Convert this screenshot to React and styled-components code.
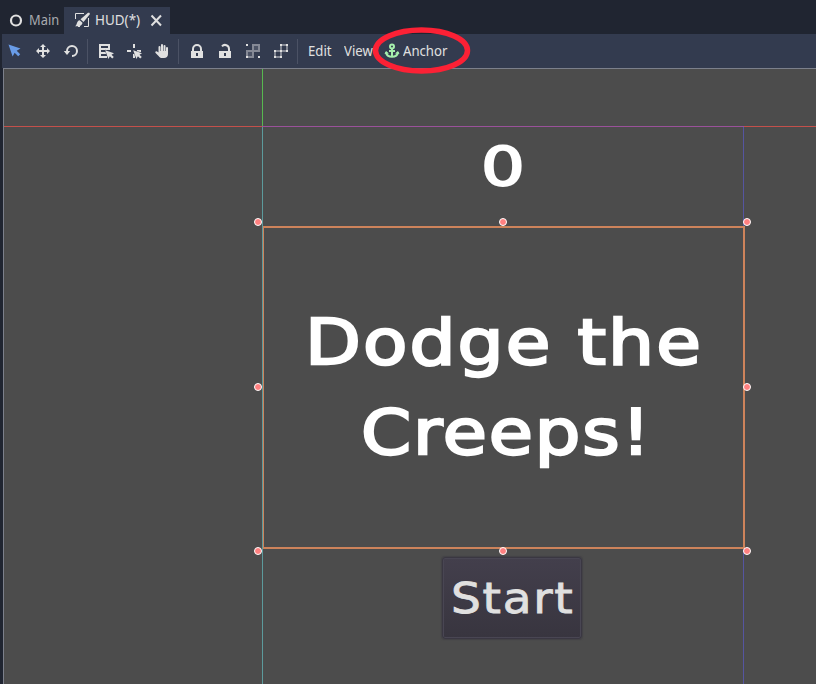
import React from "react";
import styled, { createGlobalStyle } from "styled-components";

const Global = createGlobalStyle`
  body { margin: 0; background: #202531; overflow: hidden; }
  * { box-sizing: border-box; }
`;

const Editor = styled.div`
  width: 816px;
  height: 684px;
  display: flex;
  flex-direction: column;
  position: relative;
  overflow: hidden;
  background: #202531;
  font: 14px/20px "Noto Sans", sans-serif;
  color: #e0e0e0;
`;

const TabBar = styled.div`
  height: 34px;
  display: flex;
  align-items: flex-end;
  padding-left: 2px;
`;

const Tab = styled.div`
  width: ${(p) => p.$width}px;
  height: 27px;
  display: flex;
  align-items: center;
  padding: 0 0 2px ${(p) => p.$pad}px;
  gap: 5px;
  background: ${(p) => (p.$active ? "#333b4f" : "transparent")};
  color: ${(p) => (p.$active ? "#e0e0e0" : "#a9abaf")};
`;

const Label = styled.span`
  display: block;
  width: ${(p) => p.$width}px;
  white-space: nowrap;
  transform: scaleX(${(p) => p.$scale || 0.94});
  transform-origin: left;
`;

const Toolbar = styled.div`
  height: 34px;
  margin-left: 2px;
  display: flex;
  align-items: center;
  background: #333b4f;
  flex-shrink: 0;
`;

const ToolButton = styled.div`
  width: 28px;
  height: 28px;
  padding-left: 5px;
  display: flex;
  align-items: center;
`;

const Separator = styled.div`
  width: 1px;
  height: 25px;
  margin: 0 5px 0 1px;
  background: #4b5265;
`;

const Menus = styled.div`
  display: flex;
  padding-left: 5px;
`;

const MenuItem = styled.div`
  display: flex;
  align-items: center;
  gap: 3px;
  width: ${(p) => p.$width}px;
`;

const Icon = styled.svg`
  width: 16px;
  height: 16px;
  flex-shrink: 0;
  display: block;
  overflow: visible;
`;

const Canvas = styled.div`
  flex: 1;
  margin-left: 3px;
  position: relative;
  overflow: hidden;
  background: #4c4c4c;
  border-top: 1px solid #7c808b;
  border-left: 1px solid #7c808b;
`;

const Scene = styled.div`
  position: absolute;
  left: -4px;
  top: -69px;
  width: 816px;
  height: 684px;
`;

const Guide = styled.div`
  position: absolute;
  left: ${(p) => p.$x}px;
  top: ${(p) => p.$y}px;
  width: ${(p) => p.$w || 1}px;
  height: ${(p) => p.$h || 1}px;
  background: ${(p) => p.$color};
`;

const Selection = styled.div`
  position: absolute;
  left: 262px;
  top: 226px;
  width: 483px;
  height: 323px;
  border: 2px solid #cd835b;
`;

const Handle = styled.div`
  position: absolute;
  left: ${(p) => p.$x - 4}px;
  top: ${(p) => p.$y - 4}px;
  width: 8px;
  height: 8px;
  border-radius: 50%;
  background: #ff8080;
  border: 1px solid #fff;
`;

const GameText = styled.div`
  position: absolute;
  left: ${(p) => p.$x}px;
  top: ${(p) => p.$y}px;
  font: ${(p) => p.$size}px/90px "DejaVu Sans", sans-serif;
  letter-spacing: ${(p) => p.$spacing || 0}px;
  color: ${(p) => p.$color || "#fff"};
  -webkit-text-stroke: ${(p) => p.$stroke}px ${(p) => p.$color || "#fff"};
  white-space: nowrap;
  transform: scaleX(${(p) => p.$scale || 1});
  transform-origin: left;
`;

const StartButton = styled.div`
  position: absolute;
  left: 442px;
  top: 557px;
  width: 140px;
  height: 82px;
  border-radius: 3px;
  border: 1px solid #3a3742;
  background: linear-gradient(#433f4c, #38353f);
  box-shadow: inset 0 0 0 1px #494653, 0 0 1px 1px #434246;
`;

const Highlight = styled.svg`
  position: absolute;
  left: 370px;
  top: 24px;
  width: 104px;
  height: 54px;
`;

const c = "#e0e0e0";

const Cursor = ({ color = c }) => (
  <path d="M1.5 1.5 13.5 5.6 9.7 7.7 13.2 11.3 11.2 13.3 7.7 9.8 5.6 13.5Z" fill={color} />
);

const SmallCursor = () => (
  <path
    d="M7.2 7.2 16 10.2 13.5 11.7 15.8 14 14.2 15.6 11.9 13.3 10.4 16Z"
    fill={c}
    stroke="#333b4f"
    strokeWidth=".7"
    paintOrder="stroke"
  />
);

const MoveIcon = () => (
  <Icon viewBox="0 0 16 16">
    <path d="M8 1 11 4H9v3h3V5l3 3-3 3V9H9v3h2l-3 3-3-3h2V9H4v2L1 8l3-3v2h3V4H5Z" fill={c} />
  </Icon>
);

const RotateIcon = () => (
  <Icon viewBox="0 0 16 16">
    <path d="M4 9V8a5 5 0 1 1 5 5" fill="none" stroke={c} strokeWidth="2" />
    <path d="M.8 8h6.4L4 12Z" fill={c} />
  </Icon>
);

const ListIcon = () => (
  <Icon viewBox="0 0 16 16">
    <path d="M1 1h11v2H3v2h9v2H3v2h5v2H3v2h6v2H1Z" fill={c} />
    <path d="M1 1h2v14H1ZM10 1h2v6h-2Z" fill={c} />
    <SmallCursor />
  </Icon>
);

const PivotIcon = () => (
  <Icon viewBox="0 0 16 16">
    <path d="M7 1h2v4H7ZM1 7h4v2H1ZM11 7h4v2h-4ZM7 11h2v4H7Z" fill={c} />
    <SmallCursor />
  </Icon>
);

const HandIcon = () => (
  <Icon viewBox="0 0 16 16">
    <path
      d="M4.5 9.5V4a1 1 0 0 1 2 0v4h.5V2a1 1 0 0 1 2 0v6h.5V3a1 1 0 0 1 2 0v5h.5V5a1 1 0 0 1 2 0v6c0 2.5-1.5 4-4 4H8c-1.5 0-2.5-.6-3.2-1.8L1.6 10a1 1 0 0 1 1.5-1.5Z"
      fill={c}
    />
  </Icon>
);

const LockIcon = ({ open }) => (
  <Icon viewBox="0 0 16 16">
    <path
      d={open ? "M5 3.3A4 4 0 0 1 12 6v3" : "M4 9V6a4 4 0 0 1 8 0v3"}
      fill="none"
      stroke={c}
      strokeWidth="2"
    />
    <path d="M2 8h12v7H2ZM7 10v3h2v-3Z" fill={c} fillRule="evenodd" />
  </Icon>
);

const nodes = [[7, 1], [13, 1], [1, 7], [7, 7], [13, 7], [1, 13], [7, 13]];
const corners = [[1, 1], [1, 13], [13, 13]];

const GroupIcon = ({ dots, faint }) => (
  <Icon viewBox="0 0 16 16" shapeRendering="crispEdges">
    <path d="M8 2h6v6H8ZM2 8h6v6H2Z" fill="none" stroke="#858995" strokeWidth="2" />
    {faint && <path d="M9 3h4v4H9ZM3 9h4v4H3Z" fill="#4c5365" />}
    {dots.map(([x, y]) => (
      <rect key={`${x}-${y}`} x={x} y={y} width="2" height="2" fill={c} />
    ))}
  </Icon>
);

const AnchorIcon = () => (
  <Icon viewBox="0 0 16 16">
    <circle cx="8" cy="3.5" r="2" fill="none" stroke="#a5efac" strokeWidth="2" />
    <path d="M8 5v8.5M5 8h6M2 9c.4 3 2.7 4.8 6 4.8S13.6 12 14 9" fill="none" stroke="#a5efac" strokeWidth="2" />
    <path d="M.5 11 2 8l3 2.5ZM15.5 11 14 8l-3 2.5Z" fill="#a5efac" />
  </Icon>
);

const CanvasItemIcon = () => (
  <Icon viewBox="0 0 16 16">
    <path d="M10 1.5H1.5V7M14.5 6v8.5H10M6 14.5H4" fill="none" stroke={c} />
    <path d="M15.3.7 16 2 9.5 10 6.5 7.3 14 .7ZM5.7 8.2 8.5 10.7C8 14 4.5 14.5 1 14.3 3.3 13 2.5 8.5 5.7 8.2Z" fill={c} />
  </Icon>
);

const handles = [
  [258, 222], [503, 222], [747, 222], [258, 387],
  [747, 387], [258, 551], [503, 551], [747, 551],
];

export default function App() {
  return (
    <Editor>
      <Global />
      <TabBar>
        <Tab $width={62} $pad={6}>
          <Icon viewBox="0 0 16 16">
            <circle cx="8" cy="8.5" r="5" fill="none" stroke={c} strokeWidth="2.2" />
          </Icon>
          <Label $width={30} $scale={0.92}>Main</Label>
        </Tab>
        <Tab $active $width={106} $pad={10}>
          <CanvasItemIcon />
          <Label $width={48} $scale={0.96}>HUD(*)</Label>
          <Icon viewBox="0 0 16 16">
            <path d="m3.5 3.5 9.5 10M13 3.5l-9.5 10" stroke={c} strokeWidth="2" />
          </Icon>
        </Tab>
      </TabBar>
      <Toolbar>
        <ToolButton><Icon viewBox="0 0 16 16"><Cursor color="#699ce8" /></Icon></ToolButton>
        <ToolButton><MoveIcon /></ToolButton>
        <ToolButton><RotateIcon /></ToolButton>
        <Separator />
        <ToolButton><ListIcon /></ToolButton>
        <ToolButton><PivotIcon /></ToolButton>
        <ToolButton><HandIcon /></ToolButton>
        <Separator />
        <ToolButton><LockIcon /></ToolButton>
        <ToolButton><LockIcon open /></ToolButton>
        <ToolButton><GroupIcon dots={corners} faint /></ToolButton>
        <ToolButton><GroupIcon dots={nodes} /></ToolButton>
        <Separator />
        <Menus>
          <MenuItem $width={36}><Label $width={28}>Edit</Label></MenuItem>
          <MenuItem $width={40}><Label $width={30}>View</Label></MenuItem>
          <MenuItem $width={70}><AnchorIcon /><Label $width={50}>Anchor</Label></MenuItem>
        </Menus>
      </Toolbar>
      <Canvas>
        <Scene>
          <Guide $x={0} $y={126} $w={262} $color="#c4504b" />
          <Guide $x={262} $y={126} $w={482} $color="#9a519a" />
          <Guide $x={744} $y={126} $w={72} $color="#c4504b" />
          <StartButton />
          <GameText $x={481} $y={122} $size={53} $stroke={2} $scale={1.3}>0</GameText>
          <GameText $x={304.5} $y={298} $size={63} $stroke={2.4} $spacing={1.8} $scale={1.152}>Dodge the</GameText>
          <GameText $x={361} $y={388} $size={63} $stroke={2.4} $spacing={1.6} $scale={1.14}>Creeps!</GameText>
          <GameText $x={451} $y={554} $size={42} $stroke={0.8} $spacing={1.5} $scale={1.12} $color="#e0e0e0">Start</GameText>
          <Selection />
          <Guide $x={262} $y={68} $h={58} $color="#57b84f" />
          <Guide $x={262} $y={127} $h={560} $color="#5c9a9c" />
          <Guide $x={743} $y={127} $h={99} $color="#5555a0" />
          <Guide $x={743} $y={549} $h={140} $color="#5555a0" />
          {handles.map(([x, y]) => (
            <Handle key={`${x}-${y}`} $x={x} $y={y} />
          ))}
        </Scene>
      </Canvas>
      <Highlight viewBox="0 0 104 54">
        <ellipse cx="51.5" cy="26.5" rx="46" ry="20.5" fill="none" stroke="#fc2135" strokeWidth="5.5" />
      </Highlight>
    </Editor>
  );
}
